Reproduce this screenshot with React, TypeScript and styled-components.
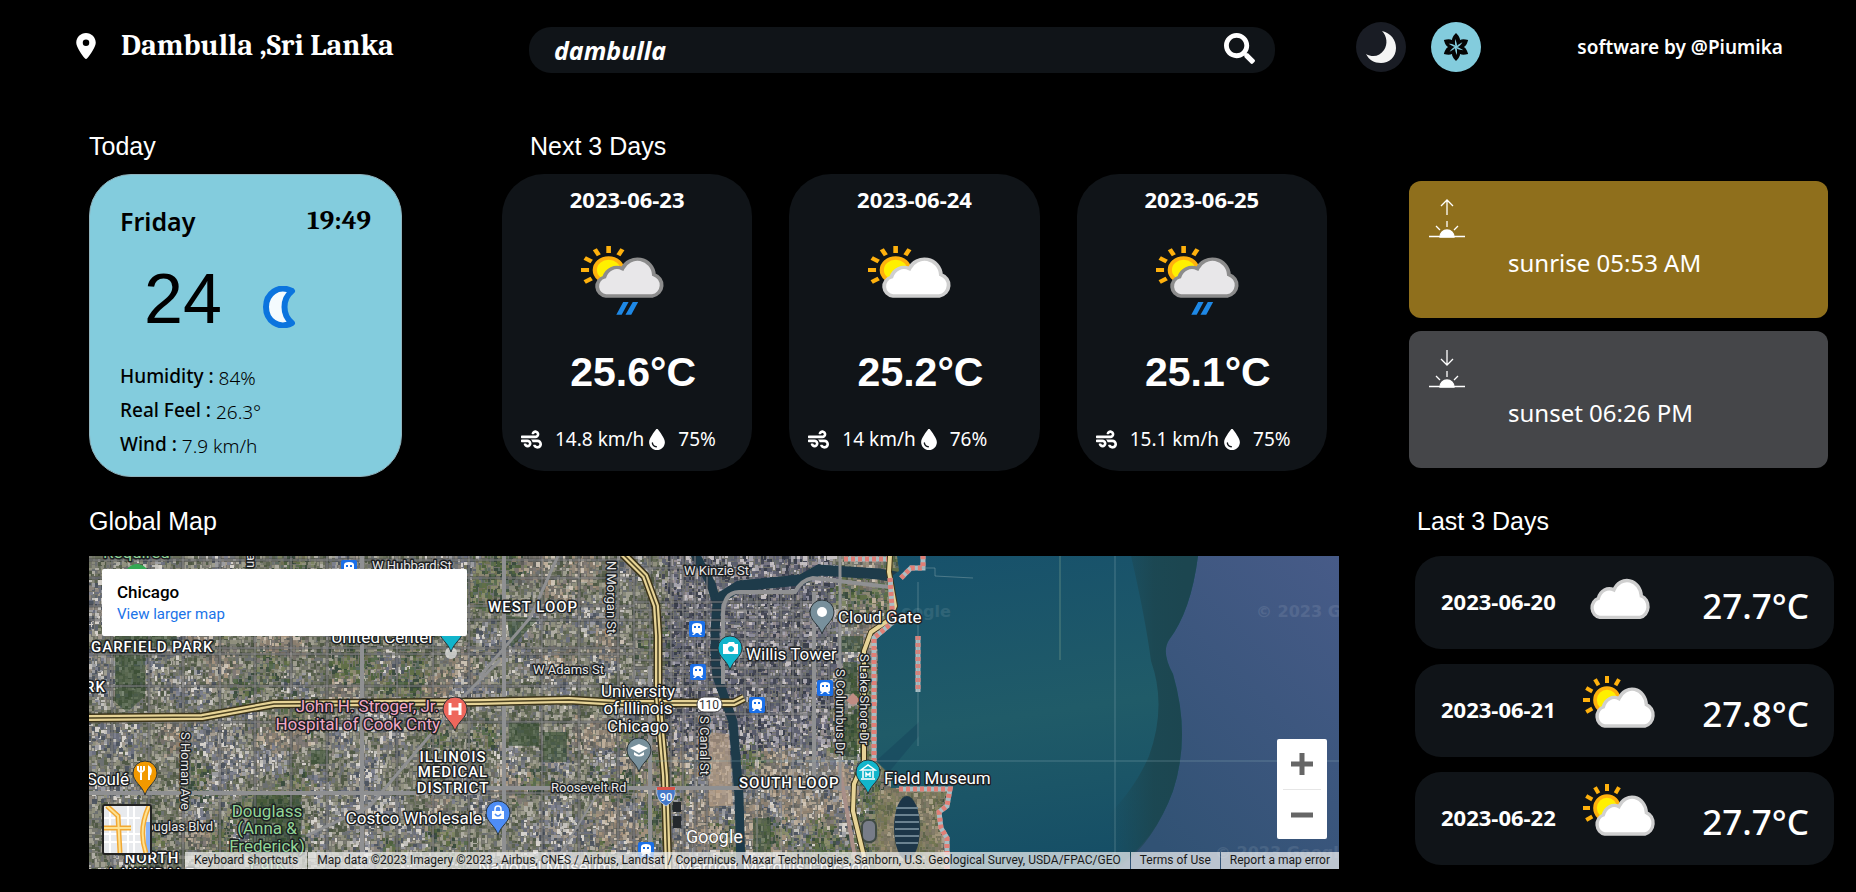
import React from "react";
import styled, { createGlobalStyle, css } from "styled-components";
import { FaSearch, FaWind } from "react-icons/fa";
import { FaLocationDot, FaDroplet } from "react-icons/fa6";

const sans = `"Segoe UI", "Noto Sans", sans-serif`;
const arial = `Arial, "Liberation Sans", sans-serif`;
const serif = `Cambria, "Liberation Serif", serif`;

const GlobalStyle = createGlobalStyle`
  *, *::before, *::after { box-sizing: border-box; }
  body { margin: 0; background: #000; color: #fff; font-family: ${sans}; }
  h1, h2, h3, p, ul, dl, dd, dt { margin: 0; padding: 0; font-weight: inherit; }
  ul { list-style: none; }
  button { border: 0; padding: 0; background: none; color: inherit; cursor: pointer; }
  svg { display: block; }
`;

/* ---------- header ---------- */

const Header = styled.header`
  display: grid;
  grid-template-columns: 453fr 746fr 508fr;
  align-items: center;
  padding: 21px 73px 0 76px;
`;

const Place = styled.h1`
  display: flex;
  align-items: center;
  gap: 25px;
  padding-bottom: 2px;
  font: bold 30px/36px ${serif};
  white-space: nowrap;
  svg { width: 20px; height: 26px; }
`;

const SearchForm = styled.form`
  display: flex;
  align-items: center;
  height: 46px;
  margin-top: 6px;
  padding: 0 20px 0 25px;
  border-radius: 22px;
  background: #101418;
`;

const SearchInput = styled.input`
  flex: 1;
  min-width: 0;
  padding: 0;
  border: 0;
  outline: 0;
  background: none;
  color: #fff;
  font: italic bold 25px/32px ${sans};
`;

const SearchButton = styled.button`
  padding-bottom: 4px;
  font-size: 31px;
`;

const HeaderEnd = styled.div`
  display: flex;
  align-items: center;
  justify-content: space-between;
  padding-left: 81px;
`;

const Themes = styled.div`
  display: flex;
  gap: 25px;
`;

const ThemeButton = styled.button<{ $active?: boolean }>`
  display: grid;
  place-items: center;
  width: 50px;
  height: 50px;
  border-radius: 50%;
  background: ${(p) => (p.$active ? "#83ccdd" : "#191c24")};
`;

const Credit = styled.p`
  font: 600 19px/28px ${sans};
  white-space: nowrap;
`;

/* ---------- page grid ---------- */

const Main = styled.main`
  display: grid;
  grid-template-columns: minmax(0, 1250fr) minmax(0, 425fr);
  gap: 29px 70px;
  padding: 58px 22px 23px 89px;
`;

const Heading = styled.h2<{ $gap?: number; $indent?: number }>`
  margin-bottom: ${(p) => p.$gap ?? 13}px;
  padding-left: ${(p) => p.$indent ?? 0}px;
  font: 25px/30px ${arial};
`;

const Overview = styled.div`
  display: grid;
  grid-template-columns: minmax(0, 313fr) minmax(0, 825fr);
  gap: 100px;
  padding-right: 12px;
`;

/* ---------- today ---------- */

const TodayCard = styled.div`
  height: 303px;
  padding: 28px 30px 0;
  border: 1px solid #8fb3bd;
  border-radius: 42px;
  background: #83ccdd;
  color: #000;
`;

const TodayTop = styled.div`
  display: flex;
  justify-content: space-between;
  align-items: center;
`;

const DayName = styled.h3`
  font: 600 25px/36px "Comic Sans MS", "Noto Sans", cursive;
`;

const Clock = styled.time`
  font: bold 27px/36px ${serif};
`;

const TodayMiddle = styled.div`
  display: flex;
  align-items: center;
  gap: 40px;
  padding: 20px 0 0 24px;
  svg { margin-top: 16px; }
`;

const BigTemp = styled.p`
  font: 70px/80px ${arial};
`;

const Stats = styled.dl`
  padding-top: 20px;
`;

const Stat = styled.div`
  display: flex;
  gap: 5px;
  height: 34px;
  font: 19px/34px ${sans};
  dt { font-weight: 500; }
  dd { padding-top: 2px; font-weight: 300; }
`;

/* ---------- forecast ---------- */

const Forecast = styled.ul`
  display: grid;
  grid-template-columns: repeat(3, minmax(0, 1fr));
  gap: 37px;
`;

const ForecastCard = styled.li`
  display: flex;
  flex-direction: column;
  height: 297px;
  padding: 10px 19px 0;
  border-radius: 42px;
  background: #101418;
`;

const CardDate = styled.h3`
  font: bold 22px/30px ${sans};
  white-space: nowrap;
`;

const ForecastDate = styled(CardDate)`
  text-align: center;
`;

const ForecastIcon = styled.div`
  align-self: center;
  margin-top: 32px;
  padding-right: 8px;
`;

const ForecastTemp = styled.p`
  margin-top: 32px;
  padding-left: 12px;
  font: bold 41px/50px ${arial};
  text-align: center;
`;

const ForecastMeta = styled.p`
  display: flex;
  align-items: center;
  margin-top: 27px;
  font: 19px/30px ${sans};
  white-space: nowrap;
  svg { flex: none; }
  span { margin-left: 13px; }
  span + svg { width: 16px; margin-left: 5px; }
`;

/* ---------- sun ---------- */

const SunStack = styled.section`
  display: flex;
  flex-direction: column;
  gap: 13px;
  padding: 50px 6px 0 0;
`;

const SunCard = styled.div<{ $bg: string }>`
  height: 137px;
  padding: 18px 19px;
  border-radius: 12px;
  background: ${(p) => p.$bg};
`;

const SunText = styled.p`
  padding: 7px 0 0 80px;
  font: 24px/36px ${sans};
  white-space: nowrap;
`;

/* ---------- history ---------- */

const History = styled.section`
  padding-left: 6px;
`;

const HistoryList = styled.ul`
  display: grid;
  gap: 15px;
`;

const HistoryRow = styled.li`
  display: flex;
  align-items: flex-start;
  height: 93px;
  padding: 12px 25px 0 26px;
  border-radius: 26px;
  background: #101418;
`;

const HistoryDate = styled(CardDate)`
  width: 142px;
  padding-top: 18px;
`;

const HistoryTemp = styled.p`
  margin-left: auto;
  padding-top: 14px;
  font: 500 35px/48px ${sans};
`;

/* ---------- map ---------- */

const MapFrame = styled.div`
  position: relative;
  height: 313px;
  overflow: hidden;
  background: #1b5468;
  font-family: Roboto, sans-serif;
  > svg { width: 100%; height: 100%; }
`;

const MapInfo = styled.div`
  position: absolute;
  top: 13px;
  left: 13px;
  width: 365px;
  height: 67px;
  padding: 12px 15px;
  border-radius: 2px;
  background: #fff;
  color: #000;
  h3 { font: 500 17px/22px Roboto, sans-serif; }
  a { display: block; color: #1a73e8; font: 15px/22px Roboto, sans-serif; text-decoration: none; }
`;

const MapType = styled.button`
  position: absolute;
  left: 13px;
  bottom: 14px;
  border: 2px solid #222;
  border-radius: 3px;
  overflow: hidden;
`;

const ZoomBox = styled.div`
  position: absolute;
  right: 12px;
  bottom: 30px;
  width: 50px;
  padding: 0 6px;
  border-radius: 2px;
  background: #fff;
  button { display: grid; place-items: center; width: 100%; height: 50px; }
  button + button { border-top: 1px solid #e6e6e6; }
`;

const Attribution = styled.div`
  position: absolute;
  right: 0;
  bottom: 0;
  display: flex;
  gap: 1px;
  max-width: 100%;
  font: 12px/17px Roboto, sans-serif;
  white-space: nowrap;
`;

const creditCell = css`
  padding: 0 9px;
  background: rgba(245, 245, 245, 0.7);
  color: #1a1a1a;
  font: inherit;
  text-decoration: none;
`;
const CreditButton = styled.button`
  ${creditCell}
`;
const CreditText = styled.span`
  ${creditCell}
`;
const CreditLink = styled.a`
  ${creditCell}
`;

/* ---------- icons ---------- */

type Sky = "cloudy" | "partly" | "rain";

const CLOUD =
  "M65 150 A25 29 0 0 1 61 93 A34 39 0 0 1 108 68 A43 49 0 0 1 190 86 A29 33 0 0 1 186 150 Z";

function SkyIcon({ sky, width }: { sky: Sky; width: number }) {
  const rain = sky === "rain";
  return (
    <svg width={width} height="69" viewBox="0 0 219 207" preserveAspectRatio="none" aria-hidden="true">
      {sky !== "cloudy" && (
        <>
          <circle cx="72" cy="72" r="36" fill="#fff000" stroke="#ffb10d" strokeWidth="11" />
          {[-120, -90, -60, -30, 0, 30].map((a) => (
            <rect key={a} x="66" y="0" width="12" height="21" fill="#ffb10d" transform={`rotate(${a} 72 72)`} />
          ))}
        </>
      )}
      <path
        d={CLOUD}
        transform={sky === "cloudy" ? "translate(-15 -2)" : undefined}
        fill={rain ? "#e8e7e9" : "#ffffff"}
        stroke={rain ? "#8c8c8c" : "#cfcfcf"}
        strokeWidth="10"
      />
      {rain && (
        <path d="M92 206 L110 168 H124 L106 206 Z M116 206 L135 168 H149 L131 206 Z" fill="#1e88e5" />
      )}
    </svg>
  );
}

const NightIcon = () => (
  <svg width="34" height="42" viewBox="0 0 34 42" aria-hidden="true">
    <path
      d="M30 5 C16 -2 4 8 4 21 C4 34 16 44 30 37 C20 29 20 13 30 5 Z"
      fill="#f4fbfe"
      stroke="#0b74de"
      strokeWidth="6"
      strokeLinejoin="round"
    />
  </svg>
);

const CrescentIcon = () => (
  <svg width="32" height="34" viewBox="0 0 32 34" aria-hidden="true">
    <path d="M17 1 C26 3 31 10 31 18 C31 27 24 33 16 33 C9 33 4 30 1 24 C8 28 15 26 19 20 C23 14 22 6 17 1 Z" fill="#f4f4f4" />
  </svg>
);

const FlowerIcon = () => (
  <svg width="30" height="30" viewBox="-15 -15 30 30" aria-hidden="true">
    {[0, 60, 120, 180, 240, 300].map((a) => (
      <path
        key={a}
        d="M0 -14 C4 -10 5 -7 3 -4 L1 -1 C1 -4 0 -6 -1 -8 C-1 -6 -1 -4 -1 -2 L-3 -4 C-5 -7 -4 -10 0 -14 Z"
        transform={`rotate(${a})`}
        fill="#050505"
      />
    ))}
  </svg>
);

function HorizonIcon({ down }: { down?: boolean }) {
  return (
    <svg width="38" height="39" viewBox="0 0 38 39" fill="none" stroke="#fff" strokeWidth="1.3" aria-hidden="true">
      <path d={down ? "M19 1 V16 M13 10 L19 16 L25 10" : "M19 16 V1 M13 7 L19 1 L25 7"} />
      <path d="M19 22 V28 M8 27 L12 31 M30 27 L26 31 M1 37.500 H37" />
      <path d="M12 38 A7 7 0 0 1 26 38 Z" fill="#fff" />
    </svg>
  );
}

/* ---------- satellite drawing ---------- */

function makeRandom(start: number) {
  let seed = start;
  return () => {
    seed = (seed * 1664525 + 1013904223) % 4294967296;
    return seed / 4294967296;
  };
}

const BLOCKS = {
  homes: ["#6f7461", "#8b8c7c", "#58604b", "#a3a294", "#666d58", "#b5b3a8", "#7b7c72", "#4d5643", "#92927f", "#6b7072"],
  works: ["#7d8190", "#9fa0a4", "#5c6470", "#c9c6c2", "#6a6f80", "#e0dcd6", "#8d8680", "#4a525e", "#a79e93", "#71747a"],
  green: ["#5f6f45", "#4a5f3a", "#7c8560", "#3f5240", "#8c8f6c", "#566b4c", "#6f6f52", "#35483a", "#8f8a74", "#5a6a60"],
  earth: ["#a8957e", "#8d8070", "#c4b49e", "#77706a", "#b3a594", "#6a6862", "#988c7c", "#d4c9ba", "#817a78", "#5c5c58"],
  tower: ["#5f6274", "#8d8c9c", "#3f4352", "#aba8b2", "#565a6c", "#cdc8cb", "#777484", "#333847", "#9a9196", "#656a70"],
};

/* Small blocks of roofs and yards, with a kind of ground chosen for each 24px cell. */
function buildTexture() {
  const rnd = makeRandom(7);
  const zoneRnd = makeRandom(99);
  const zones: string[][][] = [];
  for (let row = 0; row < 14; row++) {
    zones.push([]);
    for (let col = 0; col < 37; col++) {
      const r = zoneRnd();
      const x = col * 24;
      const y = row * 24;
      const downtown = x > 570 && x < 740 && y < 170;
      const south = y > 160 && x > 480;
      zones[row].push(
        downtown
          ? BLOCKS.tower
          : x > 745
            ? r < 0.7 ? BLOCKS.green : BLOCKS.earth
            : south
              ? r < 0.35 ? BLOCKS.earth : r < 0.55 ? BLOCKS.green : BLOCKS.works
              : r < 0.55 ? BLOCKS.homes : r < 0.78 ? BLOCKS.works : r < 0.9 ? BLOCKS.green : BLOCKS.earth,
      );
    }
  }
  const paths: Record<string, string> = {};
  for (let y = 0; y < 313; y += 3) {
    for (let x = 0; x < 866; x += 3) {
      const jx = Math.min(36, Math.max(0, Math.floor((x + (rnd() - 0.5) * 20) / 24)));
      const jy = Math.min(13, Math.max(0, Math.floor((y + (rnd() - 0.5) * 20) / 24)));
      const set = zones[jy][jx];
      const c = set[Math.floor(rnd() * set.length)];
      const w = 2 + Math.floor(rnd() * 3);
      const h = 2 + Math.floor(rnd() * 4);
      paths[c] = (paths[c] || "") + `M${x} ${y}h${w}v${h}h-${w}z`;
    }
  }
  return Object.entries(paths);
}
const TEXTURE = buildTexture();

const V_WEST = [23, 60, 94, 131, 166, 202, 238, 308, 344, 380, 453, 490, 529];
const H_WEST = [4, 22, 50, 64, 92, 98, 130, 166, 237];
const V_LOOP = [545, 561, 582, 594, 606, 618, 656, 668, 680, 692, 704, 712, 740];
const H_LOOP = [12, 46, 54, 64, 74, 83, 94, 104, 112, 121, 130, 158];

const WATER =
  "M808 0 L810 15 L800 22 L805 45 L806 66 L797 75 L787 82 L789 100 L787 205 L802 220 L802 232 L861 231 L858 250 L850 254 L852 270 L860 282 L861 313 H1250 V0 Z";

const SHORE_RAIL =
  "M755 3 H798 M801 22 L804 66 L785 82 V205 M812 22 L822 12 H834 V0 M810 233 H861 L858 250 L850 256 L852 272 L858 282 V313 M829 80 V136";

const HIGHWAYS = [
  "M0 162 L113 161 L185 148 L391 146 L480 144 L530 147 L645 147 L655 142",
  "M534 -2 L556 20 L567 50 L569 80 L569 140 L576 220 L579 313",
  "M801 0 L800 16 L806 50 L800 64 L782 76 L775 95 L775 205 L765 228 L764 255 L778 313",
];

const PINS: { x: number; y: number; fill: string; glyph: React.ReactNode }[] = [
  { x: 362, y: 74, fill: "#12b5cb", glyph: null },
  { x: 366, y: 153, fill: "#ee675c", glyph: <path d="M-5 -6 V6 M5 -6 V6 M-5 0 H5" stroke="#fff" strokeWidth="3" /> },
  { x: 56, y: 217, fill: "#f29900", glyph: <path d="M-4 -7 V7 M-7 -7 V-3 Q-4 1 -1 -3 V-7 M4 7 V-6 Q7 -4 5 2" stroke="#fff" strokeWidth="2" fill="none" /> },
  { x: 409, y: 257, fill: "#4e8df5", glyph: <><path d="M-6 -2 H6 V6 H-6 Z" fill="#fff" /><path d="M-3 -2 V-4 A3 3 0 0 1 3 -4 V-2" fill="none" stroke="#fff" strokeWidth="1.500" /><path d="M-3 1 Q0 5 3 1" fill="none" stroke="#4e8df5" strokeWidth="1.500" /></> },
  { x: 550, y: 194, fill: "#78909c", glyph: <path d="M0 -6 L9 -2 L0 3 L-9 -2 Z M-5 2 V5 Q0 8 5 5 V2 L0 5 Z" fill="#fff" /> },
  { x: 733, y: 56, fill: "#78909c", glyph: <circle r="5" fill="#fff" /> },
  { x: 641, y: 92, fill: "#12b5cb", glyph: <path fillRule="evenodd" d="M-7 -4 H-3 L-1 -6 H4 L5 -4 H8 V6 H-7 Z M1 -2 A3 3 0 1 0 1.100 -2 Z" fill="#fff" /> },
  { x: 779, y: 216, fill: "#12b5cb", glyph: <path d="M-7 -2 L0 -7 L7 -2 Z M-5 -1 V6 M5 -1 V6 M-2 5 V1 L0 3 L2 1 V5 M-7 7 H7" fill="none" stroke="#fff" strokeWidth="1.500" /> },
];

const STATIONS = [[260, 12], [608, 73], [609, 116], [668, 149], [736, 132], [557, 294]];

const outline = css`
  paint-order: stroke;
  stroke: #1c1f22;
  stroke-width: 3px;
  stroke-linejoin: round;
`;
const PlaceLabel = styled.text<{ $tone?: string }>`
  ${outline}
  fill: ${(p) => p.$tone ?? "#fff"};
  font: 17px Roboto, sans-serif;
`;
const StreetLabel = styled.text`
  ${outline}
  fill: #e8e8e8;
  font: 13px Roboto, sans-serif;
`;
const DistrictLabel = styled.text`
  ${outline}
  fill: #fff;
  font: 500 15px Roboto, sans-serif;
  letter-spacing: 1px;
`;
const Watermark = styled.text`
  fill: #fff;
  opacity: 0.09;
  font: bold 16px "DejaVu Sans", sans-serif;
`;

const GREEN = "#93d597";
const PINK = "#f3a8c6";

function Satellite() {
  return (
    <svg viewBox="0 0 1250 313" preserveAspectRatio="xMinYMid slice" role="img" aria-label="Satellite map of Chicago">
      <defs>
        <linearGradient id="lake" x1="0" y1="0" x2="0.200" y2="1">
          <stop offset="0" stopColor="#17516b" />
          <stop offset="0.550" stopColor="#205b68" />
          <stop offset="1" stopColor="#164f66" />
        </linearGradient>
        <linearGradient id="deep" x1="1" y1="0" x2="0.300" y2="1">
          <stop offset="0" stopColor="#475b88" />
          <stop offset="1" stopColor="#315274" />
        </linearGradient>
        <linearGradient id="shelf" gradientUnits="userSpaceOnUse" x1="1020" y1="0" x2="1095" y2="0">
          <stop offset="0" stopColor="#1c4650" stopOpacity="0" />
          <stop offset="0.600" stopColor="#1c4650" stopOpacity="0.900" />
          <stop offset="1" stopColor="#1c4650" />
        </linearGradient>
      </defs>

      <rect width="870" height="313" fill="#74746c" />
      {TEXTURE.map(([c, d]) => (
        <path key={c} d={d} fill={c} opacity="0.900" />
      ))}

      <g fill="#2f4a2c" opacity="0.550">
        <path d="M26 78 H56 V140 L38 156 L26 146 Z" />
        <path d="M166 236 H212 V300 H160 V262 Z M56 78 H88 V92 H56 Z" />
        <path d="M222 194 H240 V208 H222 Z M418 60 L450 62 L422 92 Z M420 166 H450 V190 H420 Z" />
        <path d="M454 176 H478 V206 H454 Z M664 262 H682 V296 H664 Z" />
        <path d="M752 80 H774 V96 H752 Z M754 106 H768 V138 H754 Z M754 158 H768 V204 H754 Z" />
      </g>
      <path d="M618 176 L640 178 L644 250 H620 Z M748 206 L754 206 L762 250 L756 250 Z" fill="#b59c84" opacity="0.700" />
      <path d="M786 236 L800 232 L858 234 L850 254 L856 313 H786 Z" fill="#857e5c" opacity="0.500" />
      <path d="M764 137 L771 144 L764 151 L757 144 Z" fill="#c08d84" />

      <g fill="none" stroke="#1e3b4a">
        <path d="M606 -2 L622 28 L628 48 Q624 90 628 120 L644 166 L650 240 L652 313" strokeWidth="9" />
        <path d="M628 44 L650 30 L712 24 L730 14 L790 18 L812 22" strokeWidth="11" />
      </g>

      <path d={WATER} fill="url(#lake)" />
      <path d="M1109 0 Q1102 55 1080 84 Q1072 96 1084 118 Q1102 180 1084 235 Q1066 284 1026 313 H1250 V0 Z" fill="url(#deep)" />
      <path d="M1042 0 Q1056 60 1062 105 Q1078 150 1060 200 Q1030 270 940 313 H1030 Q1066 284 1084 235 Q1102 180 1084 118 Q1072 96 1080 84 Q1102 55 1109 0 Z" fill="url(#shelf)" />
      <path d="M787 205 L830 166 V180 L800 216 Z" fill="#17485e" opacity="0.600" />
      <ellipse cx="818" cy="272" rx="13" ry="32" fill="#1d3648" />
      <path d="M807 252 H829 M806 259 H830 M806 266 H830 M806 273 H830 M806 280 H830 M807 287 H829" stroke="#6b8290" strokeWidth="2" />
      <rect x="773" y="264" width="14" height="22" rx="6" fill="#777c88" stroke="#3f4a44" strokeWidth="2" />
      <rect x="584" y="246" width="8" height="10" fill="#24282c" />
      <rect x="584" y="260" width="8" height="12" fill="#24282c" />

      <g fill="none" stroke="#2c2f30" strokeWidth="3" opacity="0.450">
        {V_WEST.map((x) => <path key={x} d={`M${x} 0 V313`} />)}
        {H_WEST.map((y) => <path key={y} d={`M0 ${y} H545`} />)}
        {V_LOOP.map((x) => <path key={x} d={`M${x} ${x > 650 ? 36 : 0} V${x > 620 ? 160 : 313}`} />)}
        {H_LOOP.map((y) => <path key={y} d={`M545 ${y} H${y < 20 ? 600 : 740}`} />)}
      </g>
      <g fill="none" stroke="#96979a" opacity="0.850">
        {V_WEST.map((x) => <path key={x} d={`M${x} 0 V313`} />)}
        {H_WEST.map((y) => <path key={y} d={`M0 ${y} H545`} />)}
        {V_LOOP.map((x) => <path key={x} d={`M${x} ${x > 650 ? 36 : 0} V${x > 620 ? 160 : 313}`} />)}
        {H_LOOP.map((y) => <path key={y} d={`M545 ${y} H${y < 20 ? 600 : 740}`} />)}
        <path d="M668 160 V313 M692 160 V313 M704 160 V313 M712 160 V313 M740 74 H775 M740 98 H775 M692 149 H768" />
      </g>
      <g fill="none" stroke="#8f9092">
        <path d="M273 0 V313 M415 0 V313 M561 110 V313 M725 36 V235 M391 232 H770 M200 237 H391 M0 237 H200" strokeWidth="4" />
        <path d="M411 104 L371 144 L281 250 L217 280 M469 0 L441 62 L391 120" strokeWidth="3" />
        <path d="M511 234 L470 300" strokeWidth="2" />
        <path d="M634 128 V60 Q634 36 650 36 H706 Q712 24 724 22 L800 31" strokeWidth="4" />
        <path d="M750 210 L768 313" stroke="#a98f88" strokeWidth="4" />
        <path d="M751 0 V235" strokeWidth="3" />
      </g>

      {HIGHWAYS.map((d, i) => (
        <g key={d} fill="none" strokeLinejoin="round">
          <path d={d} stroke="#3b3319" strokeWidth={i === 2 ? 6 : 9} />
          <path d={d} stroke="#e6d396" strokeWidth={i === 2 ? 4 : 6} />
          {i < 2 && <path d={d} stroke="#4a4020" strokeWidth="1.500" />}
        </g>
      ))}

      <g fill="none" strokeWidth="5">
        <path d={SHORE_RAIL} stroke="#a9bdc3" />
        <path d={SHORE_RAIL} stroke="#e07f76" strokeDasharray="4 3" />
      </g>
      <path d="M829 26 V190 M831 12 H846 V20 L884 22" fill="none" stroke="#7fa0a8" strokeWidth="1" opacity="0.500" />
      <path d="M971 0 V104" stroke="#7aa08c" strokeWidth="2" opacity="0.300" />
      <path d="M1026 0 V313 M560 205 H1250" stroke="#8fb0b8" opacity="0.400" />

      <Watermark x="812" y="61">oogle</Watermark>
      <Watermark x="1167" y="61">© 2023 G</Watermark>
      <Watermark x="1126" y="302">© 2023 Google</Watermark>

      <DistrictLabel x="2" y="96">GARFIELD PARK</DistrictLabel>
      <DistrictLabel x="17" y="136" textAnchor="end">RK</DistrictLabel>
      <DistrictLabel x="399" y="56">WEST LOOP</DistrictLabel>
      <DistrictLabel x="650" y="232">SOUTH LOOP</DistrictLabel>
      <DistrictLabel textAnchor="middle">
        <tspan x="364" y="206">ILLINOIS</tspan>
        <tspan x="364" y="221">MEDICAL</tspan>
        <tspan x="364" y="237">DISTRICT</tspan>
      </DistrictLabel>
      <DistrictLabel textAnchor="middle">
        <tspan x="63" y="307">NORTH</tspan>
        <tspan x="63" y="323">LAWNDALE</tspan>
      </DistrictLabel>

      <StreetLabel x="283" y="14">W Hubbard St</StreetLabel>
      <StreetLabel x="595" y="19">W Kinzie St</StreetLabel>
      <StreetLabel x="444" y="118">W Adams St</StreetLabel>
      <StreetLabel x="462" y="236">Roosevelt Rd</StreetLabel>
      <StreetLabel x="124" y="275" textAnchor="end">ouglas Blvd</StreetLabel>
      <StreetLabel transform="translate(158 12) rotate(90)" textAnchor="end">an</StreetLabel>
      <StreetLabel transform="translate(92 176) rotate(90)">S Homan Ave</StreetLabel>
      <StreetLabel transform="translate(518 5) rotate(90)">N Morgan St</StreetLabel>
      <StreetLabel transform="translate(611 160) rotate(90)">S Canal St</StreetLabel>
      <StreetLabel transform="translate(747 113) rotate(90)">S Columbus Dr</StreetLabel>
      <StreetLabel transform="translate(771 98) rotate(90)">S Lake Shore Dr</StreetLabel>

      {STATIONS.map(([x, y]) => (
        <g key={`${x}-${y}`} transform={`translate(${x} ${y})`}>
          <rect x="-8" y="-8" width="16" height="16" rx="2" fill="#1a6fe8" />
          <path fillRule="evenodd" d="M-5 -3 Q-5 -6 0 -6 Q5 -6 5 -3 V2 Q5 4 3 4 L5 6 H3 L1 4 H-1 L-3 6 H-5 L-3 4 Q-5 4 -5 2 Z M-3 -3 V-1 H-1 V-3 Z M1 -3 V-1 H3 V-3 Z" fill="#fff" />
        </g>
      ))}

      <rect x="608" y="141" width="25" height="15" rx="7" fill="#fff" stroke="#444" />
      <text x="620" y="153" textAnchor="middle" fill="#333" fontFamily="Roboto, sans-serif" fontSize="12">110</text>
      <path d="M568 232 H586 Q588 244 577 250 Q566 244 568 232 Z" fill="#4478c8" stroke="#fff" strokeWidth="0.500" />
      <path d="M568 231 H586 V234 H568 Z" fill="#d9534a" />
      <text x="577" y="245" textAnchor="middle" fill="#fff" fontFamily="Roboto, sans-serif" fontWeight="500" fontSize="11">90</text>

      <circle cx="48" cy="20" r="12" fill="#34a853" />
      <circle cx="362" cy="97" r="6" fill="#d9dcda" opacity="0.800" />
      {PINS.map((p) => (
        <g key={`${p.x}-${p.y}`} transform={`translate(${p.x} ${p.y})`}>
          <path d="M0 22 C-3 12 -12 9 -12 0 A12 12 0 0 1 12 0 C12 9 3 12 0 22 Z" fill={p.fill} stroke="#2b3438" strokeWidth="1" />
          {p.glyph}
        </g>
      ))}

      <PlaceLabel x="14" y="2" $tone={GREEN}>Required</PlaceLabel>
      <PlaceLabel x="345" y="87" textAnchor="end">United Center</PlaceLabel>
      <PlaceLabel textAnchor="end" $tone={PINK}>
        <tspan x="350" y="156">John H. Stroger, Jr.</tspan>
        <tspan x="351" y="174">Hospital of Cook Cnty</tspan>
      </PlaceLabel>
      <PlaceLabel x="40" y="229" textAnchor="end">Soulé</PlaceLabel>
      <PlaceLabel x="393" y="268" textAnchor="end">Costco Wholesale</PlaceLabel>
      <PlaceLabel textAnchor="middle" $tone={GREEN}>
        <tspan x="178" y="261">Douglass</tspan>
        <tspan x="178" y="278">(Anna &amp;</tspan>
        <tspan x="178" y="296">Frederick)</tspan>
        <tspan x="178" y="313">Park</tspan>
      </PlaceLabel>
      <PlaceLabel textAnchor="middle">
        <tspan x="549" y="141">University</tspan>
        <tspan x="549" y="158">of Illinois</tspan>
        <tspan x="549" y="176">Chicago</tspan>
      </PlaceLabel>
      <PlaceLabel x="749" y="67">Cloud Gate</PlaceLabel>
      <PlaceLabel x="657" y="104">Willis Tower</PlaceLabel>
      <PlaceLabel x="795" y="228">Field Museum</PlaceLabel>
      <PlaceLabel x="389" y="317">National Museum</PlaceLabel>
      <PlaceLabel x="589" y="317">Marriott Marquis Chicago</PlaceLabel>
      <text x="597" y="287" fill="#fff" stroke="#444" strokeWidth="1" paintOrder="stroke" fontFamily="Roboto, sans-serif" fontSize="18">Google</text>
    </svg>
  );
}

const RoadThumb = () => (
  <svg width="46" height="47" viewBox="0 0 46 47" aria-hidden="true">
    <rect width="46" height="47" fill="#e8eaed" />
    <path d="M0 28 H40 M6 0 V47 M24 0 V47 M30 0 V47 M0 36 H40 M0 12 H36" stroke="#fff" strokeWidth="2" />
    <path d="M42 16 H46 V47 H42 Z" fill="#8ab4f8" />
    <path d="M3 0 L14 10 L16 47 M0 22 H27 M45 0 Q34 24 42 47" fill="none" stroke="#f2a832" strokeWidth="5" />
    <path d="M3 0 L14 10 L16 47 M0 22 H27 M45 0 Q34 24 42 47" fill="none" stroke="#fde293" strokeWidth="2" />
  </svg>
);

/* ---------- data ---------- */

const forecast: { date: string; sky: Sky; temp: string; wind: string; humidity: string }[] = [
  { date: "2023-06-23", sky: "rain", temp: "25.6°C", wind: "14.8 km/h", humidity: "75%" },
  { date: "2023-06-24", sky: "partly", temp: "25.2°C", wind: "14 km/h", humidity: "76%" },
  { date: "2023-06-25", sky: "rain", temp: "25.1°C", wind: "15.1 km/h", humidity: "75%" },
];

const history: { date: string; sky: Sky; temp: string }[] = [
  { date: "2023-06-20", sky: "cloudy", temp: "27.7°C" },
  { date: "2023-06-21", sky: "partly", temp: "27.8°C" },
  { date: "2023-06-22", sky: "partly", temp: "27.7°C" },
];

const stats = [
  ["Humidity :", "84%"],
  ["Real Feel :", "26.3°"],
  ["Wind :", "7.9 km/h"],
];

export default function App() {
  return (
    <>
      <GlobalStyle />
      <Header>
        <Place>
          <FaLocationDot />
          Dambulla ,Sri Lanka
        </Place>
        <SearchForm role="search" onSubmit={(e) => e.preventDefault()}>
          <SearchInput aria-label="City" defaultValue="dambulla" />
          <SearchButton type="submit" aria-label="Search">
            <FaSearch />
          </SearchButton>
        </SearchForm>
        <HeaderEnd>
          <Themes>
            <ThemeButton type="button" aria-label="Dark theme">
              <CrescentIcon />
            </ThemeButton>
            <ThemeButton type="button" aria-label="Blue theme" $active>
              <FlowerIcon />
            </ThemeButton>
          </Themes>
          <Credit>software by @Piumika</Credit>
        </HeaderEnd>
      </Header>

      <Main>
        <Overview>
          <section>
            <Heading>Today</Heading>
            <TodayCard>
              <TodayTop>
                <DayName>Friday</DayName>
                <Clock>19:49</Clock>
              </TodayTop>
              <TodayMiddle>
                <BigTemp>24</BigTemp>
                <NightIcon />
              </TodayMiddle>
              <Stats>
                {stats.map(([label, value]) => (
                  <Stat key={label}>
                    <dt>{label}</dt>
                    <dd>{value}</dd>
                  </Stat>
                ))}
              </Stats>
            </TodayCard>
          </section>
          <section>
            <Heading $indent={28}>Next 3 Days</Heading>
            <Forecast>
              {forecast.map((d) => (
                <ForecastCard key={d.date}>
                  <ForecastDate>{d.date}</ForecastDate>
                  <ForecastIcon>
                    <SkyIcon sky={d.sky} width={84} />
                  </ForecastIcon>
                  <ForecastTemp>{d.temp}</ForecastTemp>
                  <ForecastMeta>
                    <FaWind size={21} />
                    <span>{d.wind}</span>
                    <FaDroplet size={21} />
                    <span>{d.humidity}</span>
                  </ForecastMeta>
                </ForecastCard>
              ))}
            </Forecast>
          </section>
        </Overview>

        <SunStack>
          <SunCard $bg="#8f6f1c">
            <HorizonIcon />
            <SunText>sunrise 05:53 AM</SunText>
          </SunCard>
          <SunCard $bg="#454649">
            <HorizonIcon down />
            <SunText>sunset 06:26 PM</SunText>
          </SunCard>
        </SunStack>

        <section>
          <Heading $gap={20}>Global Map</Heading>
          <MapFrame>
            <Satellite />
            <MapInfo>
              <h3>Chicago</h3>
              <a href="#map">View larger map</a>
            </MapInfo>
            <MapType type="button" aria-label="Show street map">
              <RoadThumb />
            </MapType>
            <ZoomBox>
              <button type="button" aria-label="Zoom in">
                <svg width="22" height="22" viewBox="0 0 22 22"><path d="M11 0 V22 M0 11 H22" stroke="#666" strokeWidth="5" /></svg>
              </button>
              <button type="button" aria-label="Zoom out">
                <svg width="22" height="22" viewBox="0 0 22 22"><path d="M0 11 H22" stroke="#666" strokeWidth="5" /></svg>
              </button>
            </ZoomBox>
            <Attribution>
              <CreditButton type="button">Keyboard shortcuts</CreditButton>
              <CreditText>
                Map data ©2023 Imagery ©2023 , Airbus, CNES / Airbus, Landsat / Copernicus, Maxar Technologies, Sanborn, U.S. Geological Survey, USDA/FPAC/GEO
              </CreditText>
              <CreditLink href="#terms">Terms of Use</CreditLink>
              <CreditLink href="#report">Report a map error</CreditLink>
            </Attribution>
          </MapFrame>
        </section>

        <History>
          <Heading $gap={20} $indent={2}>Last 3 Days</Heading>
          <HistoryList>
            {history.map((d) => (
              <HistoryRow key={d.date}>
                <HistoryDate>{d.date}</HistoryDate>
                <SkyIcon sky={d.sky} width={73} />
                <HistoryTemp>{d.temp}</HistoryTemp>
              </HistoryRow>
            ))}
          </HistoryList>
        </History>
      </Main>
    </>
  );
}
